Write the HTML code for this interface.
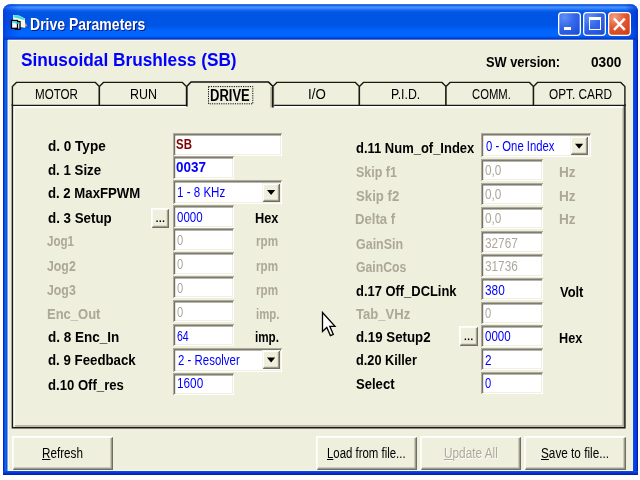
<!DOCTYPE html>
<html lang="en"><head><meta charset="utf-8"><title>Drive Parameters</title>
<style>
html,body{margin:0;padding:0;background:#fff;}
body{width:640px;height:480px;overflow:hidden;position:relative;font-family:"Liberation Sans",Arial,sans-serif;}
.abs,.t,.inp,.btn,.cmb,.dd{position:absolute;box-sizing:border-box;}
.t{white-space:pre;line-height:1em;transform-origin:0 0;font-weight:400;}
.t.b{font-weight:700;}
.t u{text-decoration:underline;text-underline-offset:1px;}
#win{left:3px;top:4px;width:635px;height:471px;border-radius:8px 8px 0 0;
 background:linear-gradient(90deg,#0019cf 0,#0831d9 1px,#166aee 2.2px,#0855dd 3.2px,#0855dd 4.3px,#fbf9ea 4.7px,#fbf9ea 5.4px,#efefdd 5.9px,#efefdd 629.6px,#0855dd 630.2px,#0046e8 631px,#0a3ce0 632.5px,#0831d9 633.5px,#00158f 635px);overflow:hidden;}
#title{left:0;top:0;width:635px;height:36px;
 background:linear-gradient(180deg,#6f93ea 0,#0a45d8 1px,#2b7bf8 2px,#4394ff 3.3px,#2e80fa 4.8px,#0f62ee 6.5px,#0256e6 8.5px,#0054e3 14px,#0055e6 22px,#005ff5 24.5px,#0066ff 28px,#0066ff 31.5px,#0058ee 33px,#003ad0 34.5px,#002fc0 36px);}
#bot{left:0;top:467px;width:635px;height:4px;background:linear-gradient(180deg,#0855dd 0,#0831d9 2px,#001ea0 4px);}
#client{left:9px;top:41px;width:623px;height:429px;background:#efefdd;}
#cream1{left:8px;top:39px;width:625px;height:3px;background:linear-gradient(180deg,#002fc0 0,#002fc0 .4px,#fbf9ea .7px,#fbf9ea 1.8px,#efefdd 2.3px,#efefdd 3px);}
.cb{position:absolute;top:12px;width:22.5px;height:24px;border-radius:4px;box-shadow:inset 0 0 0 1.3px #fff;box-sizing:border-box;
 background:radial-gradient(circle at 28% 22%,#5f8ff6 0,#3467ea 40%,#2553dc 75%,#1a43c6 100%);}
.cb.x{background:radial-gradient(circle at 28% 22%,#f2a184 0,#e35a34 40%,#d24118 80%,#b8300f 100%);}
/* sunken edit */
.inp,.cmb{background:#fff;box-shadow:inset 1.1px 1.2px 0 #aeab9a,inset -1px -1px 0 #fff,inset 2.2px 2.4px 0 #6e6c61,inset -2px -2px 0 #f1efe2;}
.btn,.dd{background:#efefdd;box-shadow:inset 1.2px 1.2px 0 #fff,inset -1.2px -1.2px 0 #716f64,inset 2px 2px 0 #fbfaf3,inset -2.5px -2.5px 0 #aca899;}
.btn.sm{box-shadow:inset 1.1px 1.2px 0 #fff,inset -1.1px -1.2px 0 #716f64,inset 2px 2px 0 #fbfaf3,inset -2.2px -2.3px 0 #aca899;}
.dd{box-shadow:inset 1.1px 1.1px 0 #f6f5ec,inset -1.2px -1.2px 0 #716f64,inset 2px 2px 0 #fff,inset -2.2px -2.2px 0 #aca899;}
</style></head><body>
<div id="win" class="abs">
 <div id="title" class="abs"></div>
 <div class="abs" style="left:0;top:0;width:635px;height:36px;background:linear-gradient(90deg,rgba(6,60,215,.85) 0,rgba(6,66,222,.55) 5px,rgba(6,70,225,0) 16px,rgba(6,70,225,0) 622px,rgba(6,60,215,.6) 630px,rgba(4,50,200,.85) 635px)"></div>
 <div id="bot" class="abs"></div>
</div>
<div id="cream1" class="abs"></div>
<div id="client" class="abs"></div>
<div class="abs" style="left:8px;top:469px;width:625px;height:2px;background:linear-gradient(180deg,#efefdd 0,#efefdd 1.1px,#fbf9ea 1.4px,#fbf9ea 2px)"></div>
<!-- title icon -->
<svg class="abs" style="left:10px;top:13px" width="20" height="18" viewBox="10 13 20 18">
 <polygon points="13,15 19,15.6 25,18.4 25,27.8 13.5,26" fill="#fdf4f0"/>
 <polygon points="13.6,15.2 18,15.4 24.6,18.4 24.6,20.2 18,18.2 13.6,17.2" fill="#3fe0dc"/>
 <polygon points="25,22.5 27.2,25.6 25,27.6" fill="#c9a45a"/>
 <rect x="15.4" y="21.6" width="4.6" height="7.6" fill="#fff" stroke="#000" stroke-width="1.3"/>
 <rect x="11.5" y="20.5" width="6" height="7.8" fill="#fff" stroke="#000" stroke-width="1.3"/>
 <rect x="12.2" y="21.2" width="4.6" height="1.5" fill="#10e0e0"/>
 <rect x="15.6" y="22.4" width="3.8" height="1.4" fill="#10d0d0"/>
</svg>
<!-- caption buttons -->
<div class="cb" style="left:558.2px;top:11.8px">
 <div class="abs" style="left:5.4px;top:15.1px;width:7.6px;height:3.3px;background:#fff"></div></div>
<div class="cb" style="left:583.3px;top:11.8px">
 <div class="abs" style="left:5.3px;top:5.6px;width:12px;height:12.6px;border:1.5px solid #fff;border-top-width:3.3px;box-sizing:border-box"></div></div>
<div class="cb x" style="left:608.4px;top:11.8px">
 <svg class="abs" style="left:1px;top:1px" width="21" height="22" viewBox="0 0 21 22"><path d="M5.0 5.6 L15.8 16.8 M15.8 5.6 L5.0 16.8" stroke="#fff" stroke-width="2.4" stroke-linecap="butt" fill="none"/></svg></div>

<!-- tab control -->
<svg class="abs" style="left:0;top:76px" width="640" height="360" viewBox="0 76 640 360" shape-rendering="auto">
 <!-- panel -->
 <rect x="12.4" y="105.4" width="612.6" height="322.4" fill="#efefdd"/>
 <path d="M623.3 106 V426 H13.5" fill="none" stroke="#aca899" stroke-width="1.6"/>
 <path d="M14 427 V106.9 H623" fill="none" stroke="#fff" stroke-width="1.5"/>
 <path d="M12.4 104 V427.7 H624.9 V104" fill="none" stroke="#1a1a14" stroke-width="1.5"/>
 <!-- inactive tabs -->
 <g fill="#efefdd" stroke="#1a1a14" stroke-width="1.4" stroke-linejoin="miter">
  <path d="M12.4 105.4 V86.5 L16.4 82.4 H95.4 L99.4 86.5 V105.4 Z"/>
  <path d="M99.4 105.4 V86.5 L103.4 82.4 H182.4 L186.5 86.5 V105.4 Z"/>
  <path d="M272.8 105.4 V86.5 L276.8 82.4 H355.4 L359.4 86.5 V105.4 Z"/>
  <path d="M359.4 105.4 V86.5 L363.4 82.4 H442 L446 86.5 V105.4 Z"/>
  <path d="M446 105.4 V86.5 L450 82.4 H529.5 L533.5 86.5 V105.4 Z"/>
  <path d="M533.5 105.4 V86.5 L537.5 82.4 H620.8 L624.9 86.5 V105.4 Z"/>
 </g>
 <!-- active tab -->
 <path d="M270.6 86.2 L274.2 86.2 L274.2 107.5 L270.6 107.5 Z" fill="#aca899"/>
 <path d="M186.9 108.4 V86.3 L191 82.1 H268.6 L272.8 86.3 V108.4 Z" fill="#efefdd"/>
 <path d="M186.9 106.4 V86.3 L191 82.1 H268.6 L272.8 86.3 V107.4" fill="none" stroke="#111" stroke-width="1.5"/>
 <path d="M271.2 87 V107.6" fill="none" stroke="#aca899" stroke-width="1.6"/>
 <rect x="208.5" y="86.6" width="44.3" height="17.2" fill="none" stroke="#000" stroke-width="1" stroke-dasharray="1.15 1.15"/>
</svg>

<!-- edits: left column -->
<div class="inp" style="left:172.8px;top:133.0px;width:109.0px;height:23.3px"></div>
<div class="inp" style="left:172.8px;top:156.0px;width:61.5px;height:23.3px"></div>
<div class="cmb" style="left:172.8px;top:180px;width:109.4px;height:24px"></div>
<div class="dd"  style="left:262px;top:182.6px;width:18.2px;height:19.2px"></div>
<div class="inp" style="left:172.8px;top:204.5px;width:61.5px;height:23.3px"></div>
<div class="inp" style="left:172.8px;top:228.3px;width:61.5px;height:22.5px"></div>
<div class="inp" style="left:172.8px;top:252.2px;width:61.5px;height:22.4px"></div>
<div class="inp" style="left:172.8px;top:276.0px;width:61.5px;height:22.3px"></div>
<div class="inp" style="left:172.8px;top:300.0px;width:61.5px;height:22.3px"></div>
<div class="inp" style="left:172.8px;top:324.0px;width:61.5px;height:22.1px"></div>
<div class="cmb" style="left:172.8px;top:347.6px;width:109.4px;height:24px"></div>
<div class="dd"  style="left:262px;top:350.2px;width:18.2px;height:19.2px"></div>
<div class="inp" style="left:172.8px;top:372.6px;width:61.5px;height:22.2px"></div>
<div class="btn sm" style="left:151px;top:208px;width:18px;height:19.6px"></div>
<!-- right column -->
<div class="cmb" style="left:481px;top:133.4px;width:109.6px;height:24px"></div>
<div class="dd"  style="left:570.3px;top:136px;width:18.2px;height:19.2px"></div>
<div class="inp" style="left:481px;top:159.0px;width:62.0px;height:22.4px"></div>
<div class="inp" style="left:481px;top:183.2px;width:62.0px;height:22.0px"></div>
<div class="inp" style="left:481px;top:207.0px;width:62.0px;height:22.0px"></div>
<div class="inp" style="left:481px;top:230.8px;width:62.0px;height:22.2px"></div>
<div class="inp" style="left:481px;top:254.4px;width:62.0px;height:22.2px"></div>
<div class="inp" style="left:481px;top:278.4px;width:62.0px;height:22.1px"></div>
<div class="inp" style="left:481px;top:301.5px;width:62.0px;height:22.1px"></div>
<div class="inp" style="left:481px;top:324.6px;width:62.0px;height:22.4px"></div>
<div class="inp" style="left:481px;top:348.4px;width:62.0px;height:22.1px"></div>
<div class="inp" style="left:481px;top:371.6px;width:62.0px;height:22.4px"></div>
<div class="btn sm" style="left:459px;top:326px;width:18.7px;height:19.6px"></div>
<!-- arrows / dots -->
<svg class="abs" style="left:0;top:0;pointer-events:none" width="640" height="480" viewBox="0 0 640 480">
 <path d="M267 190 h8.2 l-4.1 5 z M267 357.6 h8.2 l-4.1 5 z M575 143.8 h8.2 l-4.1 5 z" fill="#000"/>
 <g fill="#000">
  <rect x="156.4" y="220.4" width="1.4" height="1.6"/><rect x="159.6" y="220.4" width="1.4" height="1.6"/><rect x="162.8" y="220.4" width="1.4" height="1.6"/>
  <rect x="464.7" y="338.5" width="1.4" height="1.6"/><rect x="467.9" y="338.5" width="1.4" height="1.6"/><rect x="471.1" y="338.5" width="1.4" height="1.6"/>
 </g>
 <!-- mouse cursor -->
 <path d="M322.5 312.5 V331.4 L326.8 327.4 L330.4 335.6 L333.3 334.4 L329.8 326.3 H335 Z" fill="#fff" stroke="#000" stroke-width="1.3" stroke-linejoin="miter"/>
</svg>
<!-- bottom buttons -->
<div class="btn" style="left:12px;top:436.4px;width:101.2px;height:34px"></div>
<div class="btn" style="left:316.2px;top:436.4px;width:100.6px;height:34px"></div>
<div class="btn" style="left:420.2px;top:436.4px;width:100.4px;height:34px"></div>
<div class="btn" style="left:524px;top:436.4px;width:101.6px;height:34px"></div>
<span class="t b" style="left:47.50px;top:137px;line-height:17px;font-size:15.4px;color:#000;transform:scaleX(0.8802);">d. 0 Type</span>
<span class="t b" style="left:47.50px;top:161px;line-height:17px;font-size:15.4px;color:#000;transform:scaleX(0.8625);">d. 1 Size</span>
<span class="t b" style="left:47.50px;top:184px;line-height:17px;font-size:15.4px;color:#000;transform:scaleX(0.8558);">d. 2 MaxFPWM</span>
<span class="t b" style="left:47.50px;top:209px;line-height:17px;font-size:15.4px;color:#000;transform:scaleX(0.8668);">d. 3 Setup</span>
<span class="t b" style="left:47.30px;top:232px;line-height:17px;font-size:15.4px;color:#aca899;transform:scaleX(0.7535);">Jog1</span>
<span class="t b" style="left:47.30px;top:257px;line-height:17px;font-size:15.4px;color:#aca899;transform:scaleX(0.8003);">Jog2</span>
<span class="t b" style="left:47.30px;top:281px;line-height:17px;font-size:15.4px;color:#aca899;transform:scaleX(0.8003);">Jog3</span>
<span class="t b" style="left:46.66px;top:305px;line-height:17px;font-size:15.4px;color:#aca899;transform:scaleX(0.8446);">Enc_Out</span>
<span class="t b" style="left:47.50px;top:328px;line-height:17px;font-size:15.4px;color:#000;transform:scaleX(0.8769);">d. 8 Enc_In</span>
<span class="t b" style="left:47.50px;top:351px;line-height:17px;font-size:15.4px;color:#000;transform:scaleX(0.8618);">d. 9 Feedback</span>
<span class="t b" style="left:47.50px;top:376px;line-height:17px;font-size:15.4px;color:#000;transform:scaleX(0.8529);">d.10 Off_res</span>
<span class="t b" style="left:355.70px;top:139px;line-height:17px;font-size:15.4px;color:#000;transform:scaleX(0.8429);">d.11 Num_of_Index</span>
<span class="t b" style="left:355.90px;top:163px;line-height:17px;font-size:15.4px;color:#aca899;transform:scaleX(0.8094);">Skip f1</span>
<span class="t b" style="left:355.90px;top:187px;line-height:17px;font-size:15.4px;color:#aca899;transform:scaleX(0.8577);">Skip f2</span>
<span class="t b" style="left:355.35px;top:210px;line-height:17px;font-size:15.4px;color:#aca899;transform:scaleX(0.8548);">Delta f</span>
<span class="t b" style="left:356.00px;top:235px;line-height:17px;font-size:15.4px;color:#aca899;transform:scaleX(0.8104);">GainSin</span>
<span class="t b" style="left:356.00px;top:258px;line-height:17px;font-size:15.4px;color:#aca899;transform:scaleX(0.7955);">GainCos</span>
<span class="t b" style="left:355.70px;top:282px;line-height:17px;font-size:15.4px;color:#000;transform:scaleX(0.8397);">d.17 Off_DCLink</span>
<span class="t b" style="left:356.30px;top:305px;line-height:17px;font-size:15.4px;color:#aca899;transform:scaleX(0.8510);">Tab_VHz</span>
<span class="t b" style="left:355.70px;top:328px;line-height:17px;font-size:15.4px;color:#000;transform:scaleX(0.8634);">d.19 Setup2</span>
<span class="t b" style="left:355.70px;top:351px;line-height:17px;font-size:15.4px;color:#000;transform:scaleX(0.8277);">d.20 Killer</span>
<span class="t b" style="left:355.90px;top:375px;line-height:17px;font-size:15.4px;color:#000;transform:scaleX(0.8492);">Select</span>
<span class="t b" style="left:254.87px;top:209px;line-height:17px;font-size:15.4px;color:#000;transform:scaleX(0.8311);">Hex</span>
<span class="t b" style="left:255.54px;top:232px;line-height:17px;font-size:15.4px;color:#aca899;transform:scaleX(0.7557);">rpm</span>
<span class="t b" style="left:255.54px;top:257px;line-height:17px;font-size:15.4px;color:#aca899;transform:scaleX(0.7557);">rpm</span>
<span class="t b" style="left:255.54px;top:281px;line-height:17px;font-size:15.4px;color:#aca899;transform:scaleX(0.7557);">rpm</span>
<span class="t b" style="left:255.56px;top:305px;line-height:17px;font-size:15.4px;color:#aca899;transform:scaleX(0.7378);">imp.</span>
<span class="t b" style="left:254.94px;top:328px;line-height:17px;font-size:15.4px;color:#000;transform:scaleX(0.7575);">imp.</span>
<span class="t b" style="left:559.32px;top:163px;line-height:17px;font-size:15.4px;color:#aca899;transform:scaleX(0.8833);">Hz</span>
<span class="t b" style="left:559.32px;top:187px;line-height:17px;font-size:15.4px;color:#aca899;transform:scaleX(0.8833);">Hz</span>
<span class="t b" style="left:559.32px;top:210px;line-height:17px;font-size:15.4px;color:#aca899;transform:scaleX(0.8833);">Hz</span>
<span class="t b" style="left:559.70px;top:283px;line-height:17px;font-size:15.4px;color:#000;transform:scaleX(0.8381);">Volt</span>
<span class="t b" style="left:559.38px;top:329px;line-height:17px;font-size:15.4px;color:#000;transform:scaleX(0.8239);">Hex</span>
<span class="t b" style="left:21.30px;top:50px;line-height:20px;font-size:17.8px;color:#0000ff;transform:scaleX(0.9699);">Sinusoidal Brushless (SB)</span>
<span class="t b" style="left:486.30px;top:53px;line-height:17px;font-size:15.4px;color:#000;transform:scaleX(0.8336);">SW version:</span>
<span class="t b" style="left:590.60px;top:53px;line-height:17px;font-size:15.4px;color:#000;transform:scaleX(0.8878);">0300</span>
<span class="t b" style="left:30.34px;top:15px;line-height:18px;font-size:16.4px;color:#fff;transform:scaleX(0.8554);text-shadow:1px 1px 0 #0a1883;">Drive Parameters</span>
<span class="t" style="left:34.75px;top:85px;line-height:17px;font-size:15.5px;color:#000;transform:scaleX(0.7489);">MOTOR</span>
<span class="t" style="left:130.20px;top:85px;line-height:17px;font-size:15.5px;color:#000;transform:scaleX(0.8029);">RUN</span>
<span class="t b" style="left:210.09px;top:87px;line-height:17px;font-size:16px;color:#000;transform:scaleX(0.8128);">DRIVE</span>
<span class="t" style="left:307.74px;top:85px;line-height:17px;font-size:15.5px;color:#000;transform:scaleX(0.8566);">I/O</span>
<span class="t" style="left:390.80px;top:85px;line-height:17px;font-size:15.5px;color:#000;transform:scaleX(0.7953);">P.I.D.</span>
<span class="t" style="left:471.90px;top:85px;line-height:17px;font-size:15.5px;color:#000;transform:scaleX(0.7278);">COMM.</span>
<span class="t" style="left:548.50px;top:85px;line-height:17px;font-size:15.5px;color:#000;transform:scaleX(0.7614);">OPT. CARD</span>
<span class="t b" style="left:175.90px;top:135px;line-height:17px;font-size:15.4px;color:#800000;transform:scaleX(0.7430);">SB</span>
<span class="t b" style="left:175.90px;top:158px;line-height:17px;font-size:15.4px;color:#0000ff;transform:scaleX(0.8759);">0037</span>
<span class="t" style="left:177.25px;top:183px;line-height:17px;font-size:15.4px;color:#0000ff;transform:scaleX(0.7526);">1 - 8 KHz</span>
<span class="t" style="left:177.00px;top:208px;line-height:17px;font-size:15.4px;color:#0000ff;transform:scaleX(0.7482);">0000</span>
<span class="t" style="left:177.20px;top:231px;line-height:17px;font-size:15.4px;color:#aca899;transform:scaleX(0.7250);">0</span>
<span class="t" style="left:177.20px;top:255px;line-height:17px;font-size:15.4px;color:#aca899;transform:scaleX(0.7250);">0</span>
<span class="t" style="left:177.20px;top:279px;line-height:17px;font-size:15.4px;color:#aca899;transform:scaleX(0.7250);">0</span>
<span class="t" style="left:177.20px;top:303px;line-height:17px;font-size:15.4px;color:#aca899;transform:scaleX(0.7250);">0</span>
<span class="t" style="left:177.20px;top:327px;line-height:17px;font-size:15.4px;color:#0000ff;transform:scaleX(0.6834);">64</span>
<span class="t" style="left:177.60px;top:351px;line-height:17px;font-size:15.4px;color:#0000ff;transform:scaleX(0.7436);">2 - Resolver</span>
<span class="t" style="left:176.63px;top:374px;line-height:17px;font-size:15.4px;color:#0000ff;transform:scaleX(0.7650);">1600</span>
<span class="t" style="left:486.30px;top:137px;line-height:17px;font-size:15.4px;color:#0000ff;transform:scaleX(0.7343);">0 - One Index</span>
<span class="t" style="left:485.20px;top:161px;line-height:17px;font-size:15.4px;color:#aca899;transform:scaleX(0.7679);">0,0</span>
<span class="t" style="left:485.20px;top:185px;line-height:17px;font-size:15.4px;color:#aca899;transform:scaleX(0.7679);">0,0</span>
<span class="t" style="left:485.20px;top:209px;line-height:17px;font-size:15.4px;color:#aca899;transform:scaleX(0.7679);">0,0</span>
<span class="t" style="left:485.20px;top:234px;line-height:17px;font-size:15.4px;color:#aca899;transform:scaleX(0.7647);">32767</span>
<span class="t" style="left:485.20px;top:257px;line-height:17px;font-size:15.4px;color:#aca899;transform:scaleX(0.7647);">31736</span>
<span class="t" style="left:485.20px;top:281px;line-height:17px;font-size:15.4px;color:#0000ff;transform:scaleX(0.7683);">380</span>
<span class="t" style="left:485.20px;top:304px;line-height:17px;font-size:15.4px;color:#aca899;transform:scaleX(0.7250);">0</span>
<span class="t" style="left:485.20px;top:327px;line-height:17px;font-size:15.4px;color:#0000ff;transform:scaleX(0.7512);">0000</span>
<span class="t" style="left:485.40px;top:351px;line-height:17px;font-size:15.4px;color:#0000ff;transform:scaleX(0.7625);">2</span>
<span class="t" style="left:485.20px;top:374px;line-height:17px;font-size:15.4px;color:#0000ff;transform:scaleX(0.7250);">0</span>
<span class="t" style="left:42.04px;top:444px;line-height:17px;font-size:15.4px;color:#000;transform:scaleX(0.7586);"><u>R</u>efresh</span>
<span class="t" style="left:326.86px;top:444px;line-height:17px;font-size:15.4px;color:#000;transform:scaleX(0.7409);"><u>L</u>oad from file...</span>
<span class="t" style="left:443.83px;top:444px;line-height:17px;font-size:15.4px;color:#aca899;transform:scaleX(0.7674);text-shadow:1px 1px 0 #fff;"><u>U</u>pdate All</span>
<span class="t" style="left:540.60px;top:444px;line-height:17px;font-size:15.4px;color:#000;transform:scaleX(0.7640);"><u>S</u>ave to file...</span>
</body></html>
